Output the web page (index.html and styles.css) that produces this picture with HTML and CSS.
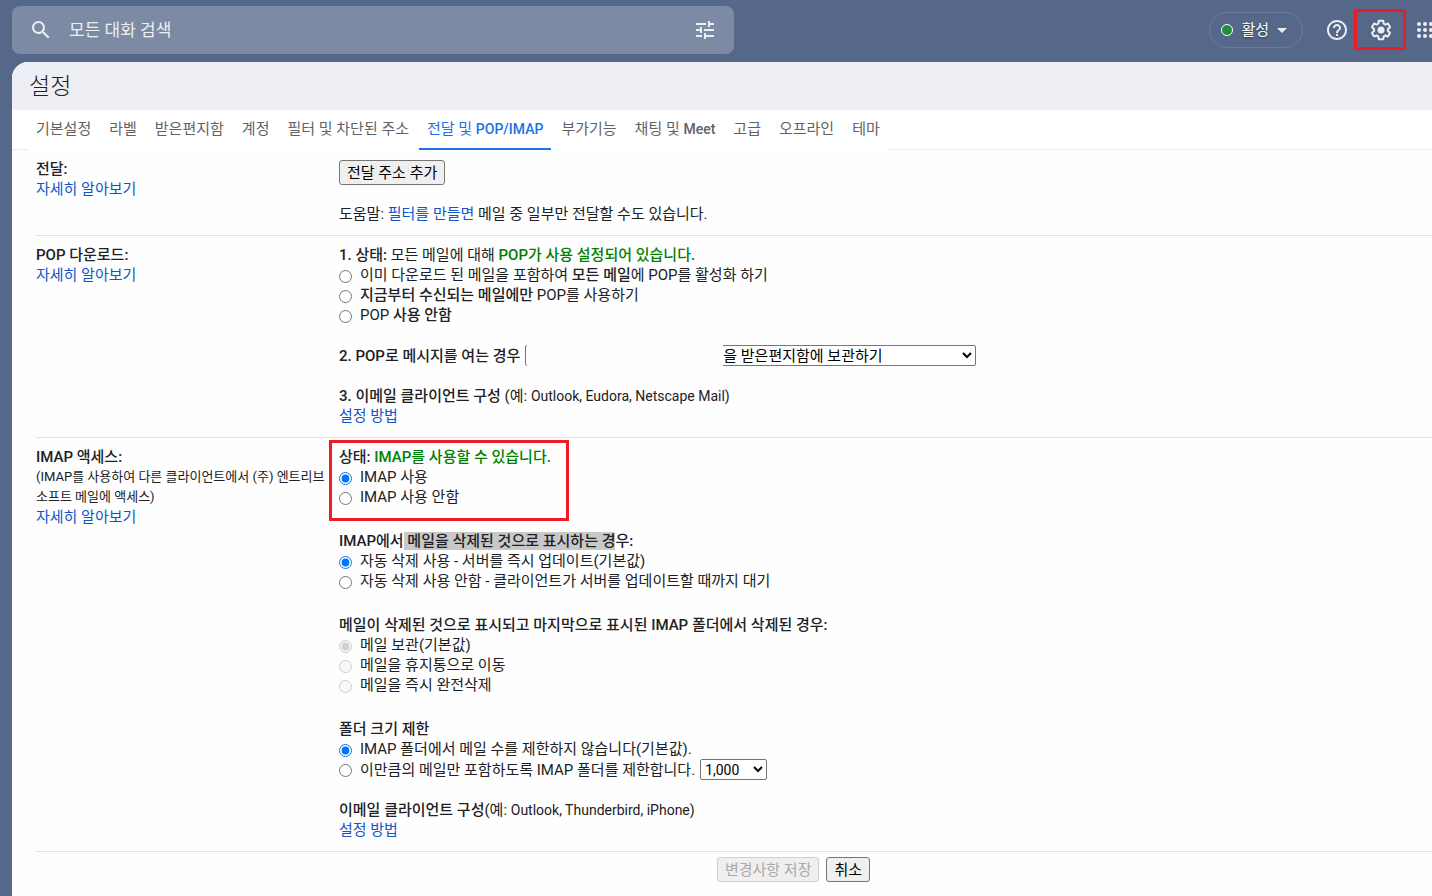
FILE: index.html
```html
<!DOCTYPE html>
<html lang="ko">
<head>
<meta charset="utf-8">
<meta name="viewport" content="width=device-width, initial-scale=1">
<title>설정</title>
<link rel="stylesheet" href="styles.css">
</head>
<body>
<header class="topbar">
  <form class="search" role="search">
    <button class="search-btn" type="button" aria-label="검색">
      <svg viewBox="0 0 24 24" width="24" height="24"><path d="M15.5 14h-.79l-.28-.27A6.47 6.47 0 0 0 16 9.5 6.5 6.5 0 1 0 9.500 16c1.610 0 3.090-.59 4.230-1.570l.27.28v.79l5 4.990L20.490 19l-4.990-5zm-6 0C7.010 14 5 11.990 5 9.500S7.010 5 9.500 5 14 7.010 14 9.500 11.990 14 9.500 14z"/></svg>
    </button>
    <input class="search-input" type="text" placeholder="모든 대화 검색" aria-label="모든 대화 검색">
    <button class="search-btn" type="button" aria-label="검색 옵션">
      <svg viewBox="0 0 24 24" width="24" height="24"><path d="M3 17v2h6v-2H3zM3 5v2h10V5H3zm10 16v-2h8v-2h-8v-2h-2v6h2zM7 9v2H3v2h4v2h2V9H7zm14 4v-2H11v2h10zm-6-4h2V7h4V5h-4V3h-2v6z"/></svg>
    </button>
  </form>
  <div class="tools">
    <button class="status" type="button"><span class="dot"></span>활성<span class="caret"></span></button>
    <button class="icon-btn" type="button" aria-label="지원">
      <svg viewBox="0 0 24 24" width="24" height="24"><path d="M11 18h2v-2h-2v2zm1-16C6.480 2 2 6.480 2 12s4.480 10 10 10 10-4.480 10-10S17.520 2 12 2zm0 18c-4.410 0-8-3.590-8-8s3.590-8 8-8 8 3.590 8 8-3.590 8-8 8zm0-14c-2.210 0-4 1.790-4 4h2c0-1.100.9-2 2-2s2 .9 2 2c0 2-3 1.750-3 5h2c0-2.250 3-2.500 3-5 0-2.210-1.790-4-4-4z"/></svg>
    </button>
    <button class="icon-btn marked" type="button" aria-label="설정">
      <svg viewBox="0 0 24 24" width="24" height="24"><path d="M13.850 22.250h-3.700c-.74 0-1.360-.54-1.450-1.270l-.27-1.890c-.27-.14-.53-.29-.79-.46l-1.800.72c-.7.26-1.470-.03-1.810-.65L2.200 15.530c-.35-.66-.2-1.440.36-1.880l1.530-1.190c-.01-.15-.02-.3-.02-.46 0-.15.01-.31.02-.46l-1.520-1.190c-.59-.45-.74-1.260-.37-1.880l1.850-3.190c.34-.62 1.110-.9 1.790-.63l1.810.73c.26-.17.52-.32.78-.46l.27-1.910c.09-.7.71-1.250 1.440-1.250h3.700c.74 0 1.360.54 1.450 1.270l.27 1.890c.27.14.53.29.79.46l1.800-.72c.71-.26 1.480.03 1.820.65l1.840 3.180c.36.66.2 1.440-.36 1.880l-1.520 1.190c.01.15.02.3.02.46s-.01.31-.02.46l1.520 1.190c.56.45.72 1.230.37 1.860l-1.860 3.220c-.34.62-1.110.9-1.800.63l-1.800-.72c-.26.17-.52.32-.78.46l-.27 1.910c-.1.68-.72 1.220-1.460 1.220zm-3.230-2h2.760l.37-2.550.53-.22c.44-.18.88-.44 1.340-.78l.45-.34 2.380.96 1.380-2.400-2.030-1.580.07-.56c.03-.26.06-.51.06-.78s-.03-.53-.06-.78l-.07-.56 2.030-1.580-1.390-2.400-2.390.96-.45-.35c-.42-.32-.87-.58-1.330-.77l-.52-.22-.37-2.550h-2.760l-.37 2.550-.53.210c-.44.190-.88.440-1.340.790l-.45.330-2.380-.95-1.390 2.390 2.030 1.580-.07.560a7 7 0 0 0-.06.790c0 .260.020.530.060.780l.07.560-2.030 1.580 1.380 2.400 2.390-.96.45.350c.43.330.86.580 1.330.770l.53.220.38 2.550z"/><circle cx="12" cy="12" r="3.500"/></svg>
    </button>
    <button class="icon-btn" type="button" aria-label="앱">
      <svg viewBox="0 0 24 24" width="24" height="24"><circle cx="6" cy="6" r="2"/><circle cx="12" cy="6" r="2"/><circle cx="18" cy="6" r="2"/><circle cx="6" cy="12" r="2"/><circle cx="12" cy="12" r="2"/><circle cx="18" cy="12" r="2"/><circle cx="6" cy="18" r="2"/><circle cx="12" cy="18" r="2"/><circle cx="18" cy="18" r="2"/></svg>
    </button>
  </div>
</header>

<main class="card">
  <h1 class="title">설정</h1>
  <nav class="tabs">
    <div class="tab-list">
      <a class="tab" href="#general">기본설정</a>
      <a class="tab" href="#labels">라벨</a>
      <a class="tab" href="#inbox">받은편지함</a>
      <a class="tab" href="#accounts">계정</a>
      <a class="tab" href="#filters">필터 및 차단된 주소</a>
      <a class="tab active" href="#fwdandpop">전달 및 <span class="en">POP/IMAP</span></a>
      <a class="tab" href="#addons">부가기능</a>
      <a class="tab" href="#chat">채팅 및 <span class="en">Meet</span></a>
      <a class="tab" href="#advanced">고급</a>
      <a class="tab" href="#offline">오프라인</a>
      <a class="tab" href="#themes">테마</a>
    </div>
  </nav>

  <form class="settings">
    <section class="row">
      <div class="side">
        <b>전달:</b>
        <a href="#forwarding-help">자세히 알아보기</a>
      </div>
      <div class="body forward">
        <button class="btn" type="button">전달 주소 추가</button>
        <p>도움말: <a href="#filters">필터를 만들면</a> 메일 중 일부만 전달할 수도 있습니다.</p>
      </div>
    </section>

    <section class="row">
      <div class="side">
        <b>POP 다운로드:</b>
        <a href="#pop-help">자세히 알아보기</a>
      </div>
      <div class="body pop">
        <div class="group">
          <p><b>1. 상태:</b> 모든 메일에 대해 <b class="on">POP가 사용 설정되어 있습니다.</b></p>
          <label class="option"><input type="radio" name="pop"><span>이미 다운로드 된 메일을 포함하여 <b>모든 메일</b>에 POP를 활성화 하기</span></label>
          <label class="option"><input type="radio" name="pop"><span><b>지금부터 수신되는 메일에만</b> POP를 사용하기</span></label>
          <label class="option"><input type="radio" name="pop"><span>POP <b>사용 안함</b></span></label>
        </div>
        <div class="inline">
          <label for="pop-action"><b>2. POP로 메시지를 여는 경우</b></label>
          <span class="masked"><select class="select action" id="pop-action"><option>을 받은편지함에 보관하기</option></select></span>
        </div>
        <div class="group">
          <p><b>3. 이메일 클라이언트 구성</b> (예: <span class="en">Outlook, Eudora, Netscape Mail)</span></p>
          <a href="#pop-setup">설정 방법</a>
        </div>
      </div>
    </section>

    <section class="row">
      <div class="side">
        <b>IMAP 액세스:</b>
        <small>(IMAP를 사용하여 다른 클라이언트에서 (주) 엔트리브소프트 메일에 액세스)</small>
        <a href="#imap-help">자세히 알아보기</a>
      </div>
      <div class="body imap">
        <div class="group highlight">
          <p><b>상태: <span class="on">IMAP를 사용할 수 있습니다.</span></b></p>
          <label class="option"><input type="radio" name="imap" checked><span>IMAP 사용</span></label>
          <label class="option"><input type="radio" name="imap"><span>IMAP 사용 안함</span></label>
        </div>
        <div class="group">
          <p><b>IMAP에서<mark> 메일을 삭제된 것으로 표시하는 경</mark>우:</b></p>
          <label class="option"><input type="radio" name="expunge" checked><span>자동 삭제 사용 - 서버를 즉시 업데이트(기본값)</span></label>
          <label class="option"><input type="radio" name="expunge"><span>자동 삭제 사용 안함 - 클라이언트가 서버를 업데이트할 때까지 대기</span></label>
        </div>
        <div class="group">
          <p><b>메일이 삭제된 것으로 표시되고 마지막으로 표시된 IMAP 폴더에서 삭제된 경우:</b></p>
          <label class="option"><input type="radio" name="deleted" checked disabled><span>메일 보관(기본값)</span></label>
          <label class="option"><input type="radio" name="deleted" disabled><span>메일을 휴지통으로 이동</span></label>
          <label class="option"><input type="radio" name="deleted" disabled><span>메일을 즉시 완전삭제</span></label>
        </div>
        <div class="last-groups">
          <div class="group">
            <p><b>폴더 크기 제한</b></p>
            <label class="option"><input type="radio" name="limit" checked><span>IMAP 폴더에서 메일 수를 제한하지 않습니다(기본값).</span></label>
            <div class="inline">
              <label class="option"><input type="radio" name="limit"><span>이만큼의 메일만 포함하도록 IMAP 폴더를 제한합니다.</span></label>
              <select class="select count" aria-label="메일 수"><option>1,000</option></select>
            </div>
          </div>
          <div class="group">
            <p><b>이메일 클라이언트 구성</b>(예: <span class="en">Outlook, Thunderbird, iPhone)</span></p>
            <a href="#imap-setup">설정 방법</a>
          </div>
        </div>
      </div>
    </section>

    <div class="actions">
      <button class="btn" type="submit" disabled>변경사항 저장</button>
      <button class="btn" type="button">취소</button>
    </div>
  </form>
</main>
</body>
</html>
```
FILE: styles.css
```css
* { box-sizing: border-box; }

body {
  margin: 0;
  min-height: 100vh;
  display: flex;
  flex-direction: column;
  overflow: hidden;
  background: #566889;
  color: #202124;
  font: 15px/20px Roboto, "Noto Sans CJK KR", sans-serif;
}

button, input, select { font: inherit; }
button { cursor: pointer; }
p { margin: 0; }
a { color: #1155cc; text-decoration: none; }
b { font-weight: 500; }
.en { font-size: 14px; }

/* Top bar */
.topbar {
  display: flex;
  align-items: center;
  justify-content: space-between;
  height: 62px;
  padding: 0 0 2px 12px;
  overflow: hidden;
}

.search {
  display: flex;
  align-items: center;
  flex: 0 1 722px;
  height: 48px;
  padding: 0 9px;
  border-radius: 8px;
  background: #7c8aa3;
}

.search-btn, .icon-btn {
  position: relative;
  display: flex;
  align-items: center;
  justify-content: center;
  flex: none;
  width: 40px;
  height: 40px;
  padding: 0;
  border: 0;
  background: none;
  fill: #eceef2;
}

.search-input {
  flex: 1;
  min-width: 0;
  padding: 0 8px;
  border: 0;
  outline: 0;
  background: none;
  color: #fff;
  font-size: 17px;
}
.search-input::placeholder { color: #eceef2; opacity: 1; }

.tools {
  display: flex;
  align-items: center;
  gap: 4px;
  flex: none;
  margin-right: -13px;
}

.status {
  display: flex;
  align-items: center;
  gap: 8px;
  height: 36px;
  margin-right: 10px;
  padding: 0 15px 0 11px;
  border: 1px solid #6b7a98;
  border-radius: 18px;
  background: none;
  color: #fff;
  text-shadow: 0 1px 2px rgba(0, 0, 0, 0.5);
}
.dot {
  width: 12px;
  height: 12px;
  border: 1px solid #fff;
  border-radius: 50%;
  background: #1e8e3e;
}
.caret {
  border: 5px solid transparent;
  border-top-color: #eceef2;
  border-bottom: 0;
}

.marked::after {
  content: "";
  position: absolute;
  inset: -1px -5px 0 -7px;
  border: 3px solid #ed1c24;
}

/* Settings card */
.card {
  flex: 1;
  margin-left: 12px;
  border-top-left-radius: 16px;
  overflow: hidden;
  background: #fefefe;
}

.title {
  margin: 0;
  padding: 9px 17px 7px;
  background: #eeeff4;
  font-size: 23px;
  font-weight: 300;
  line-height: 32px;
}

.tabs {
  display: flex;
  height: 40px;
  background: #fff;
}
.tabs::before, .tabs::after {
  content: "";
  border-bottom: 1px solid #ececec;
}
.tabs::before { width: 16px; }
.tabs::after { flex: 1; }
.tab-list {
  display: flex;
  gap: 2px;
}
.tab {
  padding: 9px 8px 0;
  white-space: nowrap;
  color: #5f6368;
}
.tab .en { font-weight: 500; }
.tab.active {
  border-bottom: 2px solid #1a73e8;
  color: #1a73e8;
}

.settings { padding-left: 24px; }

.row {
  display: grid;
  grid-template-columns: 295px 1fr;
  column-gap: 8px;
  padding: 9px 0 11px;
  border-bottom: 1px solid #e2e2e2;
}
.side, .group, .body, .last-groups {
  display: flex;
  flex-direction: column;
  align-items: flex-start;
}
.side small { font-size: 13px; }
.forward { gap: 19px; padding-top: 1px; }
.pop, .last-groups { gap: 20px; }
.imap { gap: 24px; }

.on { color: #008000; }
mark { background: #c8c8c8; color: inherit; }

.option {
  display: flex;
  align-items: center;
  gap: 8px;
}
.option input {
  width: 13px;
  height: 13px;
  margin: 2px 0 0;
}

.inline {
  display: flex;
  align-items: center;
  gap: 5px;
}

.highlight { position: relative; }
.highlight::after {
  content: "";
  position: absolute;
  inset: -7px -18px -14px -10px;
  border: 3px solid #ed1c24;
  pointer-events: none;
}

.select {
  height: 21px;
  padding: 0;
  border: 1px solid #767676;
  border-radius: 2px;
  background: #fff;
  color: #000;
  line-height: 19px;
}
.count { width: 67px; font-size: 14px; }
.action { width: 451px; padding-left: 193px; }

/* Blank patch that hides the first part of the drop-down */
.masked { position: relative; display: flex; }
.masked::after {
  content: "";
  position: absolute;
  inset: -4px auto -4px 2px;
  width: 196px;
  background: #fefefe;
}

.btn {
  height: 25px;
  padding: 0 7px;
  border: 1px solid #767676;
  border-radius: 3px;
  background: #efefef;
  color: #000;
  line-height: 20px;
}
.btn:disabled { border-color: #d0d0d0; color: #aaa; }

.actions {
  display: flex;
  justify-content: center;
  gap: 7px;
  padding: 5px 0 14px 119px;
}
```
